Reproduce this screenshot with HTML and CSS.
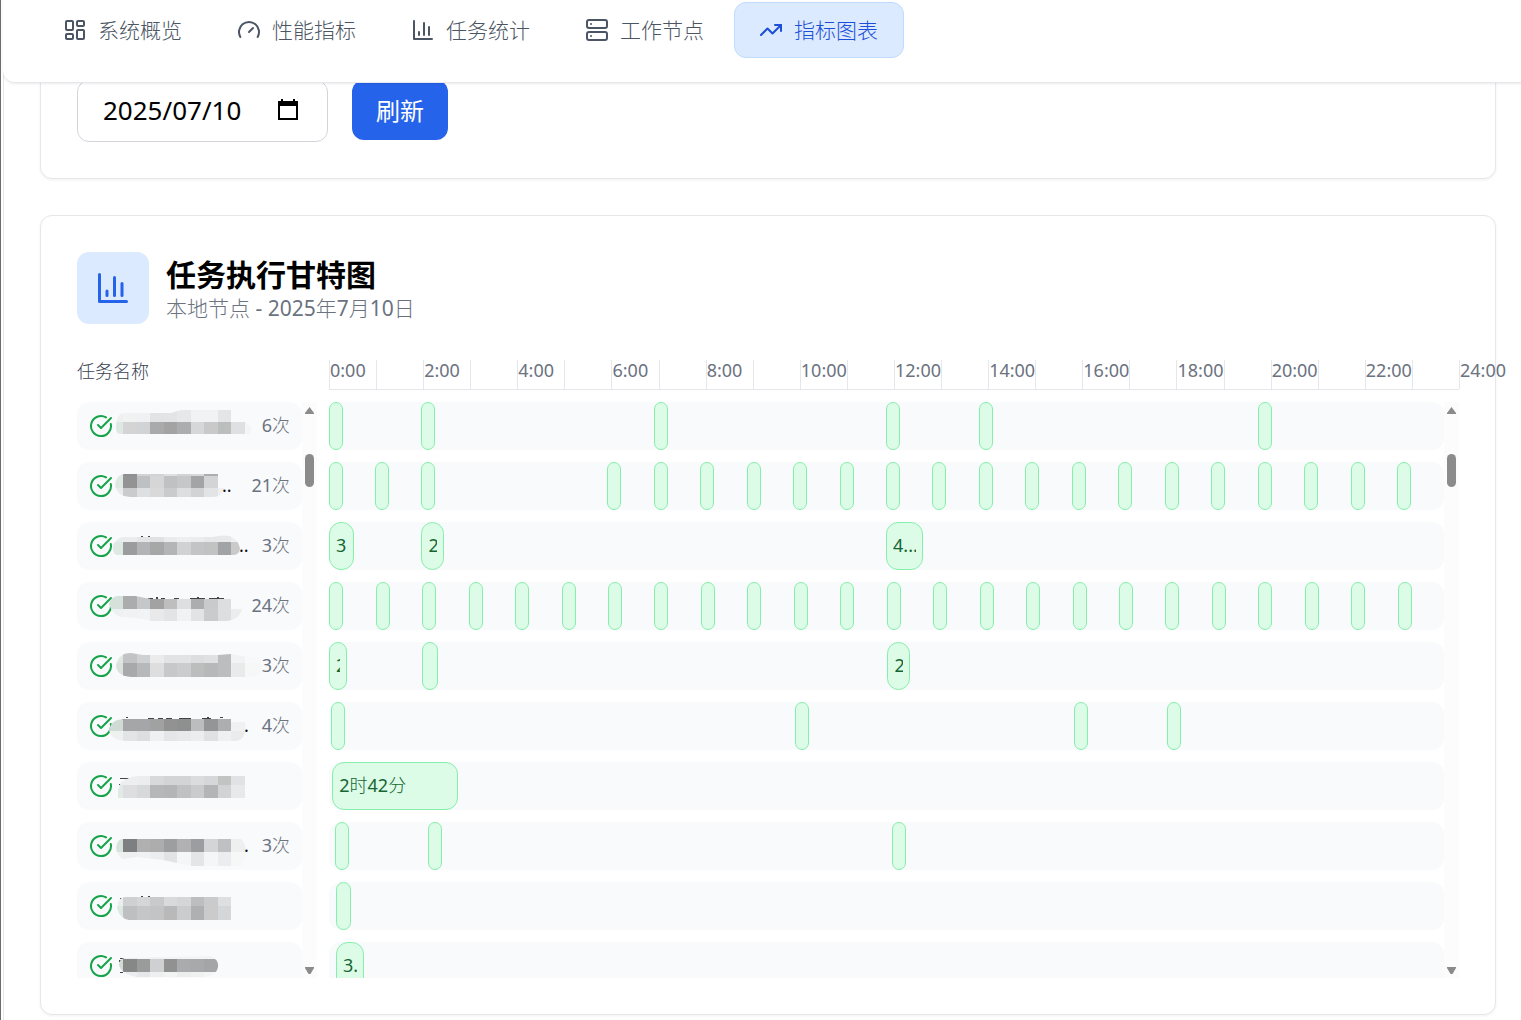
FILE: index.html
```html
<!DOCTYPE html>
<html lang="zh-CN">
<head>
<meta charset="utf-8">
<meta name="viewport" content="width=device-width, initial-scale=1">
<title>指标图表</title>
<link rel="stylesheet" href="styles.css">
</head>
<body>
<div class="page">
  <nav class="tabs">
    <button class="tab" type="button">
      <svg class="icon" viewBox="0 0 24 24"><rect x="3" y="3" width="7" height="9" rx="1"/><rect x="14" y="3" width="7" height="5" rx="1"/><rect x="14" y="12" width="7" height="9" rx="1"/><rect x="3" y="16" width="7" height="5" rx="1"/></svg>
      系统概览
    </button>
    <button class="tab" type="button">
      <svg class="icon" viewBox="0 0 24 24"><path d="m12 14 4-4"/><path d="M3.34 19a10 10 0 1 1 17.32 0"/></svg>
      性能指标
    </button>
    <button class="tab" type="button">
      <svg class="icon" viewBox="0 0 24 24"><path d="M3 3v18h18"/><path d="M18 17V9"/><path d="M13 17V5"/><path d="M8 17v-3"/></svg>
      任务统计
    </button>
    <button class="tab" type="button">
      <svg class="icon" viewBox="0 0 24 24"><rect x="2" y="2" width="20" height="8" rx="2"/><rect x="2" y="14" width="20" height="8" rx="2"/><path d="M6 6h.01"/><path d="M6 18h.01"/></svg>
      工作节点
    </button>
    <button class="tab tab-active" type="button" aria-current="page">
      <svg class="icon" viewBox="0 0 24 24"><path d="m22 7-8.500 8.500-5-5L2 17"/><path d="M16 7h6v6"/></svg>
      指标图表
    </button>
  </nav>

  <main class="content">
    <section class="card filter-card">
      <label class="date-field">
        <input class="date-input" type="text" value="2025/07/10" aria-label="日期">
        <svg class="date-icon" viewBox="0 0 20 21"><path d="M0 2h3V0h2v2h10V0h2v2h3v19H0zM2 7v12h16V7z" fill-rule="evenodd"/></svg>
      </label>
      <button class="refresh" type="button">刷新</button>
    </section>

    <section class="card">
      <header class="card-head">
        <div class="badge">
          <svg class="icon badge-icon" viewBox="0 0 24 24"><path d="M3 3v18h18"/><path d="M18 17V9"/><path d="M13 17V5"/><path d="M8 17v-3"/></svg>
        </div>
        <div class="heading">
          <h2 class="title">任务执行甘特图</h2>
          <p class="subtitle">本地节点 - 2025年7月10日</p>
        </div>
      </header>

      <div class="gantt">
        <div class="names-head">任务名称</div>
        <div class="hours" id="hours"></div>
        <div class="pane">
          <div class="rows" id="names"></div>
          <div class="scrollbar">
            <svg class="arrow" viewBox="0 0 9 7"><path d="M4.500 0 9 6v1H0V6z"/></svg>
            <span class="thumb"></span>
            <svg class="arrow arrow-down" viewBox="0 0 9 7"><path d="M0 0h9v1L5.500 7h-2L0 1z"/></svg>
          </div>
        </div>
        <div class="pane">
          <div class="rows" id="tracks"></div>
          <div class="scrollbar">
            <svg class="arrow" viewBox="0 0 9 7"><path d="M4.500 0 9 6v1H0V6z"/></svg>
            <span class="thumb"></span>
            <svg class="arrow arrow-down" viewBox="0 0 9 7"><path d="M0 0h9v1L5.500 7h-2L0 1z"/></svg>
          </div>
        </div>
      </div>
    </section>
  </main>
</div>
<script src="app.js"></script>
</body>
</html>
```
FILE: styles.css
```css
* {
  box-sizing: border-box;
}

body {
  margin: 0;
  background: #fff;
  border-left: 1px solid #6b6b6b;
  font-family: "Noto Sans", "Noto Sans CJK SC Light", "Noto Sans CJK SC", sans-serif;
  font-size: 18px;
  line-height: 24px;
  color: #374151;
  overflow-x: hidden;
}

button,
input {
  font: inherit;
}

.page {
  margin-left: 2px;
  border-left: 1px solid #e8e8ea;
}

.icon {
  flex: none;
  width: 24px;
  height: 24px;
  fill: none;
  stroke: currentColor;
  stroke-width: 2;
  stroke-linecap: round;
  stroke-linejoin: round;
}

.tabs {
  position: relative;
  z-index: 1;
  display: flex;
  gap: 5px;
  margin-left: -1px;
  padding: 2px 35px 24px;
  background: #fff;
  border-bottom: 1px solid #e5e7eb;
  border-bottom-left-radius: 12px;
  box-shadow: 0 1px 3px rgba(0, 0, 0, 0.08);
}

.tab {
  display: flex;
  align-items: center;
  gap: 11px;
  height: 56px;
  padding: 0 24px;
  border: 1px solid transparent;
  border-radius: 12px;
  background: none;
  color: #4b5563;
  font-size: 21px;
  white-space: nowrap;
}

.tab-active {
  padding-right: 25px;
  background: #dbeafe;
  border-color: #bfdbfe;
  color: #1d4ed8;
}

.content {
  display: flex;
  flex-direction: column;
  gap: 36px;
  margin-top: -40px;
  padding: 0 25px 5px 36px;
}

.card {
  padding: 36px;
  background: #fff;
  border: 1px solid #e5e7eb;
  border-radius: 12px;
  box-shadow: 0 1px 3px rgba(0, 0, 0, 0.06);
}

.filter-card {
  display: flex;
  align-items: flex-start;
  gap: 24px;
}

.date-field {
  display: flex;
  align-items: center;
  width: 251px;
  height: 62px;
  padding: 0 29px 3px 25px;
  border: 1px solid #d1d5db;
  border-radius: 12px;
}

.date-input {
  flex: 1;
  min-width: 0;
  padding: 0;
  border: 0;
  outline: 0;
  background: none;
  color: #000;
  font-size: 26px;
}

.date-icon {
  flex: none;
  width: 20px;
  height: 21px;
  fill: #000;
}

.refresh {
  width: 96px;
  height: 60px;
  padding: 0;
  border: 0;
  border-radius: 12px;
  background: #2563eb;
  color: #fff;
  font-family: "Noto Sans CJK SC", sans-serif;
  font-size: 24px;
}

.card-head {
  display: flex;
  align-items: center;
  gap: 17px;
  margin-bottom: 36px;
}

.badge {
  display: flex;
  align-items: center;
  justify-content: center;
  width: 72px;
  height: 72px;
  border-radius: 12px;
  background: #dbeafe;
  color: #2563eb;
}

.badge-icon {
  width: 36px;
  height: 36px;
}

.heading {
  padding-top: 2px;
}

.title,
.subtitle {
  margin: 0;
}

.title {
  color: #000;
  font-family: "Noto Sans CJK SC", sans-serif;
  font-size: 30px;
  line-height: 38px;
  font-weight: 700;
}

.subtitle {
  color: #6b7280;
  font-size: 21px;
  line-height: 32px;
}

.gantt {
  display: grid;
  grid-template-columns: 240px minmax(0, 1fr);
  gap: 12px;
}

.names-head {
  line-height: 22px;
}

.hours {
  display: grid;
  grid-template-columns: repeat(24, minmax(0, 1fr)) 0;
  height: 30px;
  border-bottom: 1px solid #e5e7eb;
  color: #6b7280;
  line-height: 20px;
  white-space: nowrap;
}

.hour {
  border-left: 1px solid #e5e7eb;
}

.pane {
  display: flex;
  height: 576px;
  overflow: hidden;
}

.rows {
  flex: 1;
  min-width: 0;
  display: flex;
  flex-direction: column;
  gap: 12px;
}

.name-row,
.track {
  flex: none;
  height: 48px;
  border-radius: 12px;
  background: #f9fafb;
}

.name-row {
  display: flex;
  align-items: center;
  padding: 0 12px;
}

.status {
  color: #16a34a;
}

.mask {
  flex: none;
  width: 136px;
  height: 48px;
  overflow: visible;
}

.count {
  flex: 1;
  padding-bottom: 2px;
  color: #6b7280;
  text-align: right;
  white-space: nowrap;
}

.track {
  position: relative;
}

.bar {
  position: absolute;
  top: 0;
  left: calc(var(--start) / 24 * 100%);
  display: flex;
  align-items: center;
  height: 48px;
  padding: 0 6px 2px;
  border: 1px solid #86efac;
  border-radius: 12px;
  background: #dcfce7;
  color: #166534;
}

.bar-text {
  overflow: hidden;
  white-space: nowrap;
}

.scrollbar {
  flex: none;
  display: flex;
  flex-direction: column;
  align-items: center;
  width: 15px;
  padding: 5px 0 4px;
  background: #fcfcfc;
}

.arrow {
  width: 9px;
  height: 7px;
  fill: #8b8b8b;
}

.thumb {
  width: 9px;
  height: 33px;
  margin-top: 40px;
  border-radius: 5px;
  background: #8b8b8b;
}

.arrow-down {
  margin-top: auto;
}
```
FILE: app.js
```js
// Column edges of the name masks, in pixels from the end of the status icon.
const EDGES = [3, 10, 24, 37, 51, 64, 78, 91, 105, 118, 132, 138];

const every = (from, to, shift = 0) =>
  Array.from({ length: to - from + 1 }, (_, i) => [Math.max(0, from + i + shift), 14]);

// bands: [top, bottom, one grey per column]; clip: outline of the mask.
// runs: [start hour, width, label]
const tasks = [
  {
    count: "6次",
    clip: "M3 26Q3 11 12 11H58L68 8H118V20H132L138 24V32H8Q3 32 3 26z",
    bands: [
      [8, 20, "eef1f0 f1f2f2 f0f1f2 e2e3e4 e3e4e5 e8e8e8 f1f2f3 f1f2f3 e4e5e6"],
      [20, 32, "dfe9e4 d4d4d5 d2d3d4 a9aaac a3a3a4 acadaf d6d7d9 c9c9ca bcbdbd dfe0e1 f4f5f6"]
    ],
    runs: [[0, 14], [1.99, 14], [6.99, 14], [11.99, 14], [13.99, 14], [19.99, 14]]
  },
  {
    count: "21次", tail: ["..", 109],
    clip: "M2 24Q3 12 12 12H105V26H111Q109 35 100 35H17Q5 35 2 24z",
    bands: [
      [12, 14, "dfe9e4 8f8f90 d3d3d4 d3d3d4 e0e0e0 d3d3d4 d8d8d9 aeaeb0 dcdddd"],
      [14, 26, "dfe9e4 939393 bfc0c2 d6d6d6 c0c1c3 c6c7c8 a3a4a6 d3d4d6 f1f2f2"],
      [26, 35, "e8edeb cacbcc dedfe0 d9d9da cacbcc dddedf d2d3d4 e3e4e5 eff0f1"]
    ],
    runs: [...every(0, 2, -0.01), ...every(6, 23, -0.01)]
  },
  {
    count: "3次", tail: ["..", 126], marks: [[28, 14, 2, 1], [35, 14, 2, 1]],
    clip: "M0 24Q3 15 12 15H100Q124 9 127 27 126 33 120 33H4Q0 33 0 24z",
    bands: [
      [12, 20, "e8edeb ebecec e4e5e6 e0e1e1 ebebec eeeff0 ebecec e7e8e9 e8e9e9 efefef"],
      [20, 33, "dfe9e4 9b9c9e b3b4b6 a6a7a7 b4b5b7 d1d2d4 c3c4c6 c1c2c2 a2a3a4 cacaca"]
    ],
    runs: [[0, 25, "3"], [1.99, 23, "2"], [11.99, 37, "4..."]]
  },
  {
    count: "24次", marks: [[35, 16, 5, 1], [43, 15, 2, 2], [48, 16, 4, 1], [61, 16, 5, 1], [77, 16, 15, 1], [84, 15, 2, 1], [96, 16, 15, 1], [104, 15, 2, 1]],
    clip: "M-4 22Q-2 14 6 14H22L38 17H118V27H129Q126 39 112 39H38Q30 36 8 35-1 32-4 22z",
    bands: [
      [14, 27, "d6e1db abacae c6c7c9 a2a2a2 bebebe dedfe0 acadaf c9cacc dddee0 f2f3f3"],
      [27, 39, "edf1ef f1f2f3 f2f3f4 e9e9e9 e3e4e5 f1f2f4 e2e3e4 cacbcd dddee0 eceded"]
    ],
    runs: every(0, 23, 0.005)
  },
  {
    count: "3次",
    clip: "M3 24Q5 11 18 11L30 13H105L118 12 148 17V32L138 35H18Q4 34 3 24z",
    bands: [
      [11, 21, "e0e8e4 c2c3c5 cfd0d1 ebebec e2e3e4 e2e3e4 dddedf e0e1e2 bcbdbf f2f3f4 f8f9f9"],
      [21, 35, "dae3de a8a9ab b7b8ba dedede c7c8ca caccce bcbdbd b7b8ba bcbdbf e9eaeb f6f7f7"]
    ],
    runs: [[0, 18, "2"], [2.01, 16], [12.02, 23, "2"]]
  },
  {
    count: "4次", tail: [".", 131], marks: [[9, 17, 9, 1], [13, 15, 2, 1], [35, 16, 6, 1], [45, 16, 5, 1], [53, 16, 6, 1], [66, 16, 12, 1], [89, 16, 9, 1], [94, 15, 2, 1], [107, 15, 3, 1]],
    clip: "M-4 28Q-2 17 12 17H118V20H132Q134 39 122 39H12Q-2 38-4 28z",
    bands: [
      [17, 29, "d0dbd5 a5a6a8 a5a6a8 a0a2a2 929292 8e8f8f bcbdbf 949597 adaeb0 f0f1f2"],
      [29, 39, "edf1ef e3e4e5 dddedf eff0f1 e5e6e7 e8e9ea ecedee e0e1e3 eff0f2 eaebec"]
    ],
    runs: [[0.04, 14], [10.03, 14], [16.03, 14], [18.03, 14]]
  },
  {
    count: "", marks: [[7, 16, 14, 1], [6, 22, 2, 1]],
    clip: "M5 28L8 20 18 15 26 14H132V36H5z",
    bands: [
      [14, 23, "edf1ef edeeef ecedee d8d9da d3d4d6 d3d4d5 dbdcdd d6d7d8 c2c4c4 e1e2e3"],
      [23, 36, "e0ebe5 dedee0 d8d9da b6b7b9 b4b6b6 c0c1c3 cacbcd b4b6b6 d1d3d4 e8e9ea"]
    ],
    runs: [[0.07, 126, "2时42分"]]
  },
  {
    count: "3次", tail: [".", 131],
    clip: "M3 26Q4 17 10 17H128Q133 20 133 34L128 44H78L50 38 24 35 10 37Q4 34 3 26z",
    bands: [
      [17, 30, "d9e3dd 7e7f80 b0b0b1 adadae 9c9ea0 b1b1b3 9c9da0 d4d5d7 bfc0c2 eeefef"],
      [30, 44, "edf1ef eeefef f0f1f2 ecedee e2e3e4 f5f6f7 e4e5e6 f5f6f7 ecedee f6f7f7"]
    ],
    runs: [[0.13, 14], [2.13, 14], [12.12, 14]]
  },
  {
    count: "", marks: [[7, 16, 5, 1], [28, 14, 2, 1], [35, 14, 2, 1]],
    clip: "M4 26Q5 15 12 15H118V38H16Q6 36 4 26z",
    bands: [
      [15, 24, "e8efec cfd0d2 d5d6d8 c9cacc d9dadb d5d6d8 bdbec0 cbcbcc dedfe1"],
      [24, 38, "dfe9e4 bebfc1 c5c6c8 c3c4c6 b9b9ba cbcccd aeb0b2 cbcbcc d5d6d8"]
    ],
    runs: [[0.15, 15]]
  },
  {
    count: "", marks: [[7, 16, 4, 1], [6, 18, 2, 2], [7, 30, 3, 1]],
    clip: "M6 23Q6 17 12 16L98 14Q106 18 105 25 103 35 90 35H24Q8 32 6 23z",
    bands: [
      [14, 17, "edf1ef eeefef f5f6f6 f0f1f2 f3f4f4 f3f4f4 f3f4f4 f3f4f4"],
      [17, 30, "cfdcd5 868887 9a9b9b cfd0d2 919192 aaabad a8a9ab a3a5a6"],
      [30, 35, "edf1ef ecedee e6e7e8 eeefef f2f3f3 eceded f0f1f1 f4f5f5"]
    ],
    runs: [[0.15, 28, "3."]]
  }
];

const statusIcon =
  '<svg class="icon status" viewBox="0 0 24 24"><path d="M21.800 10A10 10 0 1 1 17 3.340"/><path d="m9 11 3 3L22 4"/></svg>';

function mask(task, id) {
  const cells = task.bands.map(([top, bottom, greys]) => {
    const list = greys.split(" ");
    return list.map((grey, i) => {
      const left = i === 0 ? -4 : EDGES[i];
      const right = i === list.length - 1 ? 148 : EDGES[i + 1];
      return `<rect x="${left}" y="${top}" width="${right - left}" height="${bottom - top}" fill="#${grey}"/>`;
    }).join("");
  }).join("");
  const marks = (task.marks || []).map(([x, y, w, h]) =>
    `<rect x="${x}" y="${y}" width="${w}" height="${h}" fill="#444"/>`).join("");
  const tail = task.tail ? `<text x="${task.tail[1]}" y="30" font-size="18" fill="#111">${task.tail[0]}</text>` : "";
  return `<svg class="mask" viewBox="0 0 136 48" shape-rendering="crispEdges" aria-hidden="true">
    <clipPath id="mask-${id}"><path d="${task.clip}"/></clipPath>
    ${marks}<g clip-path="url(#mask-${id})">${cells}</g>${tail}</svg>`;
}

document.getElementById("hours").innerHTML = Array.from({ length: 25 }, (_, h) =>
  `<div class="hour">${h % 2 ? "" : h + ":00"}</div>`).join("");

document.getElementById("names").innerHTML = tasks.map((task, i) =>
  `<div class="name-row">${statusIcon}${mask(task, i)}<span class="count">${task.count}</span></div>`).join("");

document.getElementById("tracks").innerHTML = tasks.map(task =>
  `<div class="track">${task.runs.map(([start, width, label]) =>
    `<div class="bar" style="--start: ${start}; width: ${width}px">${label ? `<span class="bar-text">${label}</span>` : ""}</div>`
  ).join("")}</div>`).join("");
```
